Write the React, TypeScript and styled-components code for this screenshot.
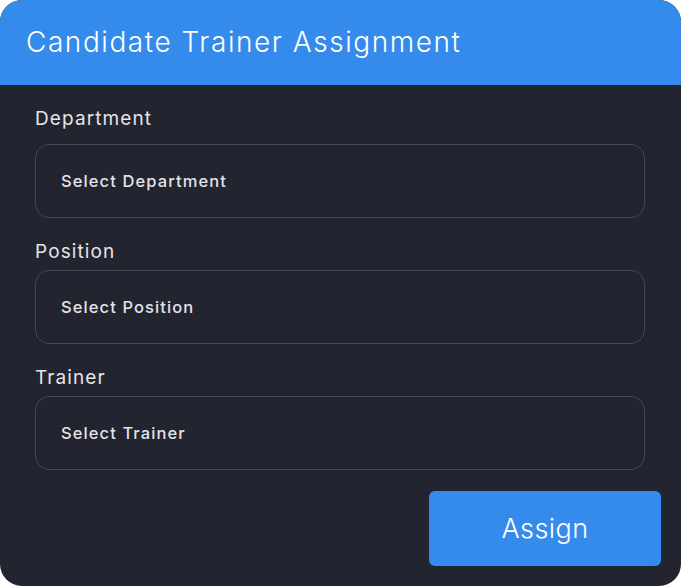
import React from 'react';
import styled, { createGlobalStyle } from 'styled-components';

const GlobalStyle = createGlobalStyle`
  html, body {
    margin: 0;
    padding: 0;
    background: #FFFFFF;
  }
  body {
    font-family: 'Inter', 'Noto Sans', sans-serif;
  }
  * {
    box-sizing: border-box;
  }
`;

const StyledCard = styled.div`
  width: 681px;
  height: 586px;
  background: #22242F;
  border-radius: 22px;
  overflow: hidden;
  display: flex;
  flex-direction: column;
`;

const StyledHeader = styled.div`
  height: 85px;
  background: #348BEB;
  display: flex;
  align-items: center;
  padding: 0 26px 2px;
`;

const StyledTitle = styled.h1`
  margin: 0;
  color: #FFFFFF;
  font-size: 28px;
  font-weight: 300;
  letter-spacing: 1.55px;
`;

const StyledBody = styled.div`
  flex: 1;
  display: flex;
  flex-direction: column;
  padding: 22px 20px 20px;
`;

const StyledFields = styled.div`
  display: flex;
  flex-direction: column;
  gap: 22px;
  padding: 0 16px 0 15px;
`;

const StyledLabel = styled.label`
  color: #E4E5EA;
  font-size: 19px;
  line-height: 24px;
  font-weight: 400;
  letter-spacing: 1.1px;
  margin-bottom: 6px;
`;

const StyledField = styled.div`
  display: flex;
  flex-direction: column;

  &:first-child ${StyledLabel} {
    margin-bottom: 13px;
  }
`;

const StyledSelect = styled.div`
  height: 74px;
  border: 1px solid #454857;
  border-radius: 14px;
  display: flex;
  align-items: center;
  padding: 0 25px;
  color: #E2E3E8;
  font-size: 16.5px;
  font-weight: 500;
  letter-spacing: 1.1px;
  cursor: pointer;
`;

const StyledActions = styled.div`
  display: flex;
  justify-content: flex-end;
  margin-top: 21px;
`;

const StyledAssignButton = styled.button`
  width: 232px;
  height: 75px;
  border: none;
  border-radius: 6px;
  background: #348BEB;
  color: #FFFFFF;
  font-family: inherit;
  font-size: 27px;
  font-weight: 300;
  letter-spacing: 0.4px;
  cursor: pointer;
`;

const fields = [
  { label: 'Department', placeholder: 'Select Department' },
  { label: 'Position', placeholder: 'Select Position' },
  { label: 'Trainer', placeholder: 'Select Trainer' },
];

const App: React.FC = () => {
  return (
    <>
      <GlobalStyle />
      <StyledCard>
        <StyledHeader>
          <StyledTitle>Candidate Trainer Assignment</StyledTitle>
        </StyledHeader>
        <StyledBody>
          <StyledFields>
            {fields.map(field => (
              <StyledField key={field.label}>
                <StyledLabel>{field.label}</StyledLabel>
                <StyledSelect>{field.placeholder}</StyledSelect>
              </StyledField>
            ))}
          </StyledFields>
          <StyledActions>
            <StyledAssignButton>Assign</StyledAssignButton>
          </StyledActions>
        </StyledBody>
      </StyledCard>
    </>
  );
};

export default App;
